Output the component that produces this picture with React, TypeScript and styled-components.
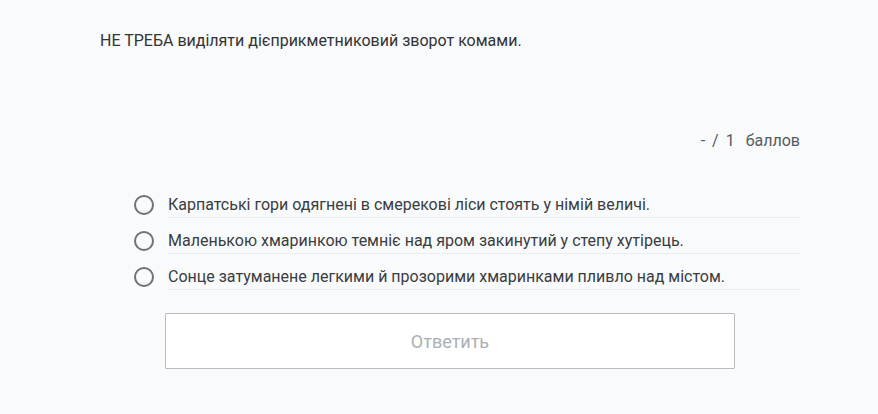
import styled, { createGlobalStyle } from 'styled-components';

const GlobalStyle = createGlobalStyle`
  body {
    margin: 0;
    background-color: #f9fafc;
    font-family: Roboto, "Liberation Sans", sans-serif;
  }
`;

const Page = styled.div`
  width: 878px;
  height: 414px;
  padding: 29px 0 0 100px;
  box-sizing: border-box;
`;

const Question = styled.div`
  width: 700px;
  display: flex;
  flex-direction: column;
`;

const Prompt = styled.p`
  margin: 0;
  font-size: 16px;
  line-height: 24px;
  color: #333;
`;

const Score = styled.div`
  margin-top: 76px;
  display: flex;
  justify-content: flex-end;
  gap: 7px;
  font-size: 16px;
  line-height: 24px;
  color: #555b61;
`;

const Options = styled.ul`
  list-style: none;
  margin: 29px 0 0 34px;
  padding: 0;
`;

const Option = styled.li`
  display: flex;
  align-items: flex-end;
  height: 36px;
`;

const Radio = styled.span`
  width: 16px;
  height: 16px;
  border: 2px solid #6b747c;
  border-radius: 50%;
  flex-shrink: 0;
  margin: 0 14px 3px 0;
`;

const Label = styled.span`
  flex: 1;
  border-bottom: 1px solid #ebedf0;
  font-size: 16px;
  line-height: 24px;
  color: #3a3d40;
`;

const SubmitButton = styled.button`
  align-self: center;
  margin-top: 23px;
  width: 570px;
  height: 56px;
  background: #fff;
  border: 1px solid #b8bcc1;
  border-radius: 1px;
  font-family: Roboto, "Liberation Sans", sans-serif;
  font-size: 18px;
  color: #a9afb4;
  cursor: default;
`;

const answers = [
  'Карпатські гори одягнені в смерекові ліси стоять у німій величі.',
  'Маленькою хмаринкою темніє над яром закинутий у степу хутірець.',
  'Сонце затуманене легкими й прозорими хмаринками пливло над містом.',
];

export default function App() {
  return (
    <>
      <GlobalStyle />
      <Page>
        <Question>
          <Prompt>НЕ ТРЕБА виділяти дієприкметниковий зворот комами.</Prompt>

          <Score>
            <span>-</span>
            <span>/</span>
            <span>1</span>
            <span>&nbsp;баллов</span>
          </Score>

          <Options>
            {answers.map((a) => (
              <Option key={a}>
                <Radio />
                <Label>{a}</Label>
              </Option>
            ))}
          </Options>

          <SubmitButton disabled>Ответить</SubmitButton>
        </Question>
      </Page>
    </>
  );
}
